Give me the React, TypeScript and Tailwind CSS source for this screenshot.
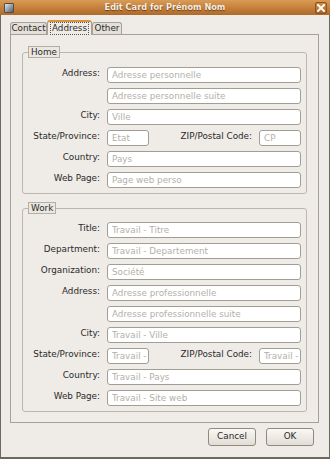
import React from "react"

const font = "font-['DejaVu_Sans','Liberation_Sans',sans-serif]"

type Row = { label: string; placeholder: string; zip?: string }

const homeRows: Row[] = [
  { label: "Address:", placeholder: "Adresse personnelle" },
  { label: "", placeholder: "Adresse personnelle suite" },
  { label: "City:", placeholder: "Ville" },
  { label: "State/Province:", placeholder: "Etat", zip: "CP" },
  { label: "Country:", placeholder: "Pays" },
  { label: "Web Page:", placeholder: "Page web perso" },
]

const workRows: Row[] = [
  { label: "Title:", placeholder: "Travail - Titre" },
  { label: "Department:", placeholder: "Travail - Departement" },
  { label: "Organization:", placeholder: "Société" },
  { label: "Address:", placeholder: "Adresse professionnelle" },
  { label: "", placeholder: "Adresse professionnelle suite" },
  { label: "City:", placeholder: "Travail - Ville" },
  { label: "State/Province:", placeholder: "Travail - Etat", zip: "Travail - CP" },
  { label: "Country:", placeholder: "Travail - Pays" },
  { label: "Web Page:", placeholder: "Travail - Site web" },
]

function Field({ placeholder, className }: { placeholder: string; className?: string }) {
  return (
    <input
      readOnly
      placeholder={placeholder}
      className={
        "h-[16px] min-w-0 rounded-[3px] border border-[#a39e95] bg-white pl-[4px] text-[8.8px] leading-[14px] outline-none placeholder:text-[#b4b0a8] " +
        font +
        " " +
        (className ?? "")
      }
    />
  )
}

function Frame({ title, rows, pt }: { title: string; rows: Row[]; pt: string }) {
  return (
    <fieldset className="mx-[11px] rounded-[3px] border border-[#bcb6ac] px-0 pb-[5px]">
      <legend className="ml-[5px] h-[12px] border border-[#b3ada3] bg-[#ebe7e1] px-[2px] text-[8.8px] leading-[10px] text-[#2a2a2a]">
        {title}
      </legend>
      <div className={"grid grid-cols-[77px_1fr] gap-x-[7px] gap-y-[5px] pr-[5px] " + pt}>
        {rows.map((r, i) => (
          <React.Fragment key={i}>
            <div className="h-[16px] text-right text-[8.8px] leading-[12px] text-[#2a2a2a] whitespace-nowrap">
              {r.label}
            </div>
            {r.zip ? (
              <div className="flex h-[16px] items-start">
                <Field placeholder={r.placeholder} className="w-[42px]" />
                <div className="flex-1 pr-[7px] text-right text-[8.8px] leading-[12px] text-[#2a2a2a] whitespace-nowrap">
                  ZIP/Postal Code:
                </div>
                <Field placeholder={r.zip} className="w-[42px]" />
              </div>
            ) : (
              <Field placeholder={r.placeholder} className="w-full" />
            )}
          </React.Fragment>
        ))}
      </div>
    </fieldset>
  )
}

export default function App() {
  return (
    <div className={"flex h-[459px] w-[330px] flex-col bg-[#efebe7] " + font}>
      {/* title bar */}
      <div className="flex h-[15px] items-center bg-gradient-to-b from-[#d99b55] via-[#c6823c] to-[#ad6a2b]">
        <div className="flex w-[18px] justify-start pl-[4px]">
          <div className="h-[10px] w-[10px] rounded-[1px] border border-[#4d4d4d] bg-gradient-to-br from-[#e4e4e4] via-[#9aa3ad] to-[#5a5f66]" />
        </div>
        <div className="flex-1 text-center text-[8.2px] font-bold leading-[15px] text-[#f4ede3] [text-shadow:0_1px_1px_#6a3b12]">
          Edit Card for Prénom Nom
        </div>
        <div className="flex w-[18px] justify-end pr-[3px]">
          <div className="flex h-[12px] w-[12px] items-center justify-center rounded-[2px] border border-[#8e5420] bg-gradient-to-b from-[#d28a44] to-[#a8652a]">
            <svg width="8" height="8" viewBox="0 0 8 8">
              <path d="M1 1 L7 7 M7 1 L1 7" stroke="#fffaf2" strokeWidth="2" strokeLinecap="square" />
            </svg>
          </div>
        </div>
      </div>

      {/* window body */}
      <div className="flex flex-1 flex-col border-x border-b-2 border-[#6d6860] pt-[5px]">
        {/* tabs */}
        <div className="relative z-10 -mb-px flex h-[15px] items-end pl-[9px] text-[8.8px] text-[#2a2a2a]">
          <div className="mb-px flex h-[12px] w-[37px] items-center justify-center rounded-t-[3px] border border-b-0 border-[#a7a096] bg-[#e4dfd8] leading-[11px]">
            Contact
          </div>
          <div className="flex h-[15px] w-[45px] items-center justify-center rounded-t-[3px] border-x border-t-2 border-x-[#a7a096] border-t-[#e08f3a] bg-[#efebe7] leading-[11px]">
            <span className="outline outline-1 outline-dotted outline-[#555] px-[1px]">Address</span>
          </div>
          <div className="mb-px flex h-[12px] w-[30px] items-center justify-center rounded-t-[3px] border border-b-0 border-[#a7a096] bg-[#e4dfd8] leading-[11px]">
            Other
          </div>
        </div>

        {/* notebook panel */}
        <div className="ml-[9px] mr-[10px] flex flex-col gap-[8px] border border-[#a7a096] pt-[11px] pb-[10px]">
          <Frame title="Home" rows={homeRows} pt="pt-[9px]" />
          <Frame title="Work" rows={workRows} pt="pt-[8px]" />
        </div>

        {/* buttons */}
        <div className="mt-[5px] flex justify-end gap-[10px] pr-[15px]">
          <button className="h-[18px] w-[48px] rounded-[3px] border border-[#8f897f] bg-gradient-to-b from-[#faf8f5] to-[#e2ddd5] text-[8.8px] text-[#2a2a2a]">
            Cancel
          </button>
          <button className="h-[18px] w-[48px] rounded-[3px] border border-[#8f897f] bg-gradient-to-b from-[#faf8f5] to-[#e2ddd5] text-[8.8px] text-[#2a2a2a]">
            OK
          </button>
        </div>
      </div>
    </div>
  )
}
